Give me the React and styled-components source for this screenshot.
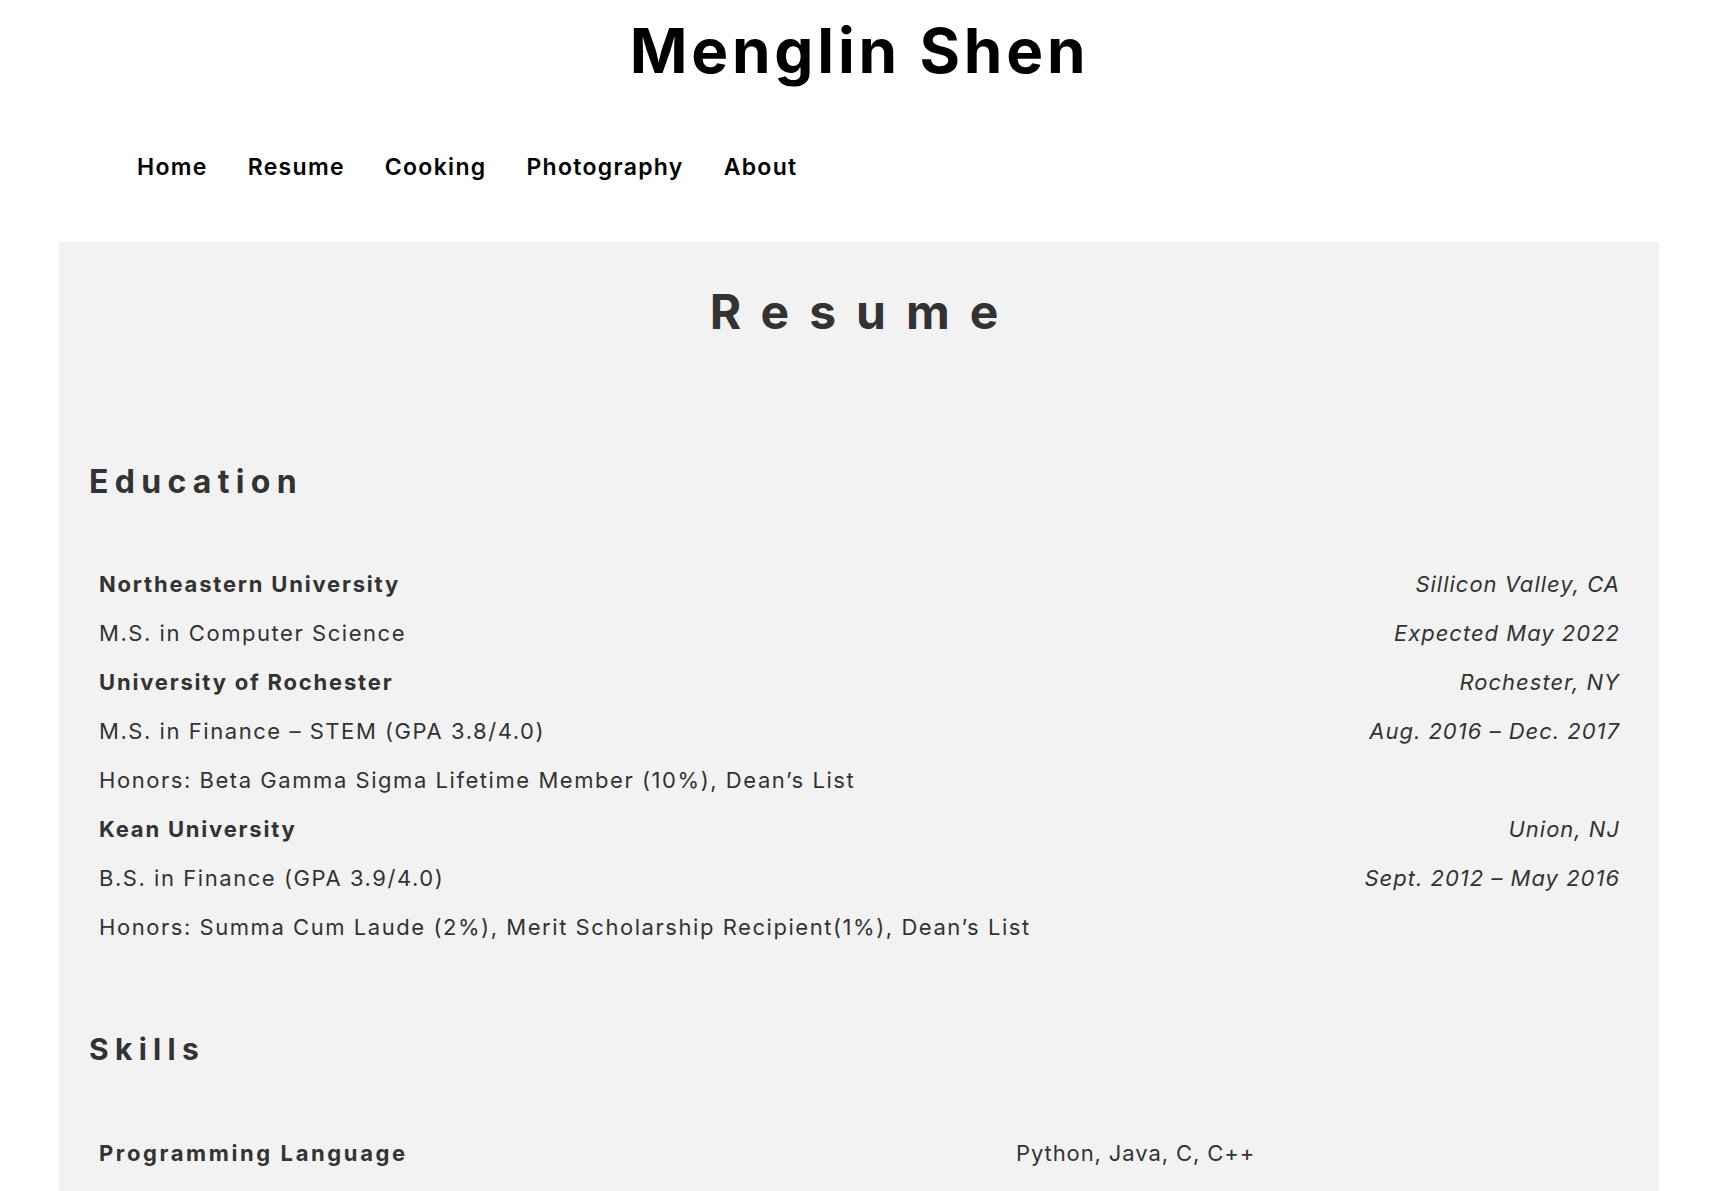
import React from "react";
import styled, { createGlobalStyle } from "styled-components";

const GlobalStyle = createGlobalStyle`
  html, body {
    margin: 0;
    padding: 0;
    background: #ffffff;
    overflow: hidden;
  }
  body {
    font-family: Inter, "Noto Sans", sans-serif;
  }
`;

const education = [
  { left: "Northeastern University", right: "Sillicon Valley, CA", bold: true },
  { left: "M.S. in Computer Science", right: "Expected May 2022" },
  { left: "University of Rochester", right: "Rochester, NY", bold: true },
  { left: "M.S. in Finance – STEM (GPA 3.8/4.0)", right: "Aug. 2016 – Dec. 2017" },
  { left: "Honors: Beta Gamma Sigma Lifetime Member (10%), Dean’s List" },
  { left: "Kean University", right: "Union, NJ", bold: true },
  { left: "B.S. in Finance (GPA 3.9/4.0)", right: "Sept. 2012 – May 2016" },
  { left: "Honors: Summa Cum Laude (2%), Merit Scholarship Recipient(1%), Dean’s List" },
];

const skills = [{ label: "Programming Language", value: "Python, Java, C, C++" }];

const navItems = ["Home", "Resume", "Cooking", "Photography", "About"];

function App() {
  return (
    <Page>
      <GlobalStyle />
      <Header>
        <SiteTitle>Menglin Shen</SiteTitle>
        <Nav>
          {navItems.map((item) => (
            <NavLink key={item} href="#">
              {item}
            </NavLink>
          ))}
        </Nav>
      </Header>
      <Panel>
        <PageTitle>Resume</PageTitle>
        <SectionTitle $top={120}>Education</SectionTitle>
        <Rows $top={58}>
          {education.map((row) => (
            <Row key={row.left}>
              <RowLeft $bold={row.bold}>{row.left}</RowLeft>
              {row.right && <RowRight>{row.right}</RowRight>}
            </Row>
          ))}
        </Rows>
        <SectionTitle $top={77} $size={30}>
          Skills
        </SectionTitle>
        <Rows $top={60}>
          {skills.map((s) => (
            <SkillRow key={s.label}>
              <SkillLabel>{s.label}</SkillLabel>
              <SkillValue>{s.value}</SkillValue>
            </SkillRow>
          ))}
        </Rows>
      </Panel>
    </Page>
  );
}

const Page = styled.div`
  width: 1711px;
  height: 1191px;
  overflow: hidden;
`;

const Header = styled.header`
  display: flex;
  flex-direction: column;
  align-items: center;
  padding-top: 20px;
`;

const SiteTitle = styled.h1`
  margin: 0;
  font-size: 62px;
  line-height: 62px;
  font-weight: 700;
  letter-spacing: 3.8px;
  color: #000;
  padding-left: 8px;
`;

const Nav = styled.nav`
  align-self: stretch;
  display: flex;
  gap: 40px;
  margin-top: 70px;
  padding-left: 137px;
`;

const NavLink = styled.a`
  font-size: 23px;
  line-height: 30px;
  font-weight: 600;
  letter-spacing: 1.3px;
  color: #000;
  text-decoration: none;
`;

const Panel = styled.main`
  margin: 60px 52px 0 59px;
  padding: 40px 30px 200px;
  background: #f2f2f2;
  color: #333;
`;

const PageTitle = styled.h2`
  margin: 0;
  text-align: center;
  font-size: 48px;
  line-height: 60px;
  font-weight: 700;
  letter-spacing: 20px;
  padding-left: 10px;
`;

const SectionTitle = styled.h3`
  margin: ${(p) => p.$top}px 0 0;
  font-size: ${(p) => p.$size || 32}px;
  line-height: 40px;
  font-weight: 700;
  letter-spacing: 6.3px;
`;

const Rows = styled.div`
  margin: ${(p) => p.$top}px 10px 0;
  display: flex;
  flex-direction: column;
`;

const Row = styled.div`
  display: flex;
  justify-content: space-between;
  padding: 8px 0;
  font-size: 22px;
  line-height: 33px;
`;

const RowLeft = styled.span`
  font-weight: ${(p) => (p.$bold ? 700 : 400)};
  letter-spacing: ${(p) => (p.$bold ? 1.8 : 1.55)}px;
`;

const RowRight = styled.span`
  font-style: italic;
  letter-spacing: 1px;
  margin-right: -1px;
`;

const SkillRow = styled.div`
  display: grid;
  grid-template-columns: 917px 1fr;
  padding: 8px 0;
  font-size: 22px;
  line-height: 33px;
`;

const SkillLabel = styled.span`
  font-weight: 700;
  letter-spacing: 2.6px;
`;

const SkillValue = styled.span`
  font-weight: 400;
  letter-spacing: 0.9px;
`;

export default App;
